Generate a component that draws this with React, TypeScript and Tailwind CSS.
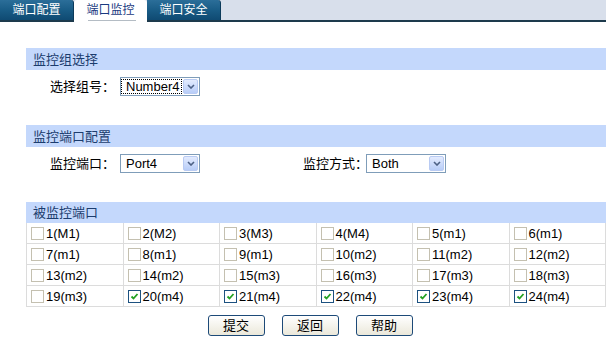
import clsx from "clsx";

const ports = [
  "1(M1)", "2(M2)", "3(M3)", "4(M4)", "5(m1)", "6(m1)",
  "7(m1)", "8(m1)", "9(m1)", "10(m2)", "11(m2)", "12(m2)",
  "13(m2)", "14(m2)", "15(m3)", "16(m3)", "17(m3)", "18(m3)",
  "19(m3)", "20(m4)", "21(m4)", "22(m4)", "23(m4)", "24(m4)",
];
const checkedPorts = ["20(m4)", "21(m4)", "22(m4)", "23(m4)", "24(m4)"];

function Tab({ label, active }: { label: string; active?: boolean }) {
  if (active) {
    return (
      <div className="relative -mb-[2px] flex h-[22px] w-[73px] items-start justify-center rounded-t-[3px] bg-white pt-[3px] text-[12px] leading-[14px] text-[#1a3a80]">
        {label}
        <span className="absolute bottom-[1px] left-[14px] h-px w-[48px] bg-[#b4bcc4]" />
      </div>
    );
  }
  return (
    <div className="flex h-[20px] w-[74px] items-start justify-center rounded-tr-[3px] border-r border-[#0b3a5a] bg-gradient-to-b from-[#2b6e99] via-[#195c86] to-[#0f4a72] pt-[3px] text-[12px] leading-[14px] text-white">
      {label}
    </div>
  );
}

function Header({ title, tall = true }: { title: string; tall?: boolean }) {
  return (
    <div
      className={clsx(
        "flex items-center bg-[#c4d8fc] pl-[7px] text-[13px] leading-[15px] text-[#1c3d6e]",
        tall ? "h-[22px]" : "h-[21px]"
      )}
    >
      {title}
    </div>
  );
}

function Select({ value, focused }: { value: string; focused?: boolean }) {
  return (
    <div className="flex h-[19px] w-[80px] shrink-0 items-center border border-[#7f9db9] bg-white">
      <span
        className={clsx(
          "flex h-[15px] w-[61px] items-center border pl-[4px] text-[13px] leading-none text-black",
          focused ? "border-dotted border-black" : "border-transparent"
        )}
      >
        {value}
      </span>
      <span className="ml-[1px] flex h-[15px] w-[15px] items-center justify-center rounded-[2px] border border-[#b9cbf3] bg-gradient-to-b from-[#e3ebfe] to-[#b8cdf8]">
        <svg width="8" height="5" viewBox="0 0 8 5">
          <path d="M1 1 L4 4 L7 1" fill="none" stroke="#4d6185" strokeWidth="1.6" />
        </svg>
      </span>
    </div>
  );
}

function Checkbox({ checked }: { checked: boolean }) {
  return (
    <span
      className={clsx(
        "flex h-[13px] w-[13px] shrink-0 items-center justify-center border bg-white",
        checked ? "border-[#1c5180]" : "border-[#c4c0b0]"
      )}
    >
      {checked && (
        <svg width="9" height="9" viewBox="0 0 9 9">
          <path d="M1.5 4.5 L3.5 6.5 L7.5 2" fill="none" stroke="#21a121" strokeWidth="1.8" />
        </svg>
      )}
    </span>
  );
}

function Button({ label }: { label: string }) {
  return (
    <button className="flex h-[21px] w-[57px] items-center justify-center rounded-[3px] border border-[#1d4a78] bg-gradient-to-b from-white to-[#ebe8da] text-[13px] leading-[15px] text-black">
      {label}
    </button>
  );
}

export default function App() {
  return (
    <div className="h-[346px] w-[606px] overflow-hidden bg-white font-['Liberation_Sans','Noto_Sans_CJK_SC',sans-serif]">
      <div className="flex h-[22px] items-start border-b-2 border-[#1d3a4c] bg-[#d8dfeb]">
        <Tab label="端口配置" />
        <Tab label="端口监控" active />
        <Tab label="端口安全" />
      </div>

      <div className="pl-[26px] pt-[26px]">
        <Header title="监控组选择" />
        <div className="mt-[7px] flex h-[19px] items-center pl-[24px] text-[13px] leading-[19px] text-black">
          <span className="w-[70px] whitespace-nowrap">选择组号：</span>
          <Select value="Number4" focused />
        </div>

        <div className="mt-[29px]">
          <Header title="监控端口配置" />
        </div>
        <div className="mt-[7px] flex h-[19px] items-center pl-[24px] text-[13px] leading-[19px] text-black">
          <span className="w-[70px] whitespace-nowrap">监控端口：</span>
          <Select value="Port4" />
          <span className="ml-[103px] w-[63px] whitespace-nowrap">监控方式：</span>
          <Select value="Both" />
        </div>

        <div className="mt-[29px]">
          <Header title="被监控端口" tall={false} />
          <div className="grid grid-cols-6 border-l border-[#dcdcdc]">
            {ports.map((p) => (
              <div
                key={p}
                className="flex h-[21px] items-center gap-[2px] border-b border-r border-[#dcdcdc] pl-[4px] text-[13px] leading-[15px] text-black"
              >
                <Checkbox checked={checkedPorts.includes(p)} />
                <span>{p}</span>
              </div>
            ))}
          </div>
        </div>
      </div>

      <div className="flex justify-center gap-[17px] pl-[14px] pt-[8px]">
        <Button label="提交" />
        <Button label="返回" />
        <Button label="帮助" />
      </div>
    </div>
  );
}
